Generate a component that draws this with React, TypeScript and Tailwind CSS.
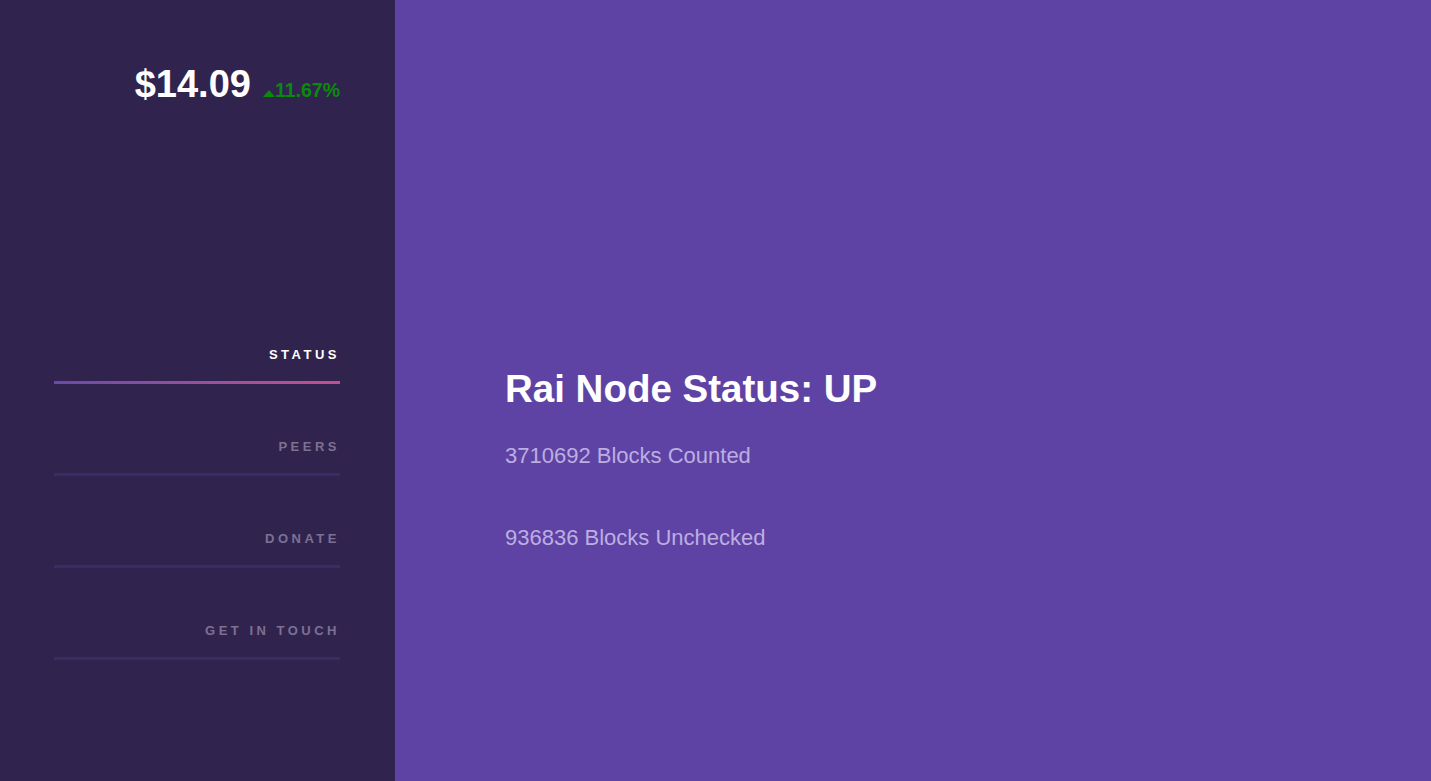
import React from 'react';

const navItems = ['Status', 'Peers', 'Donate', 'Get in touch'];

const App: React.FC = () => {
  return (
    <div className="flex w-full h-[781px] font-['Liberation_Sans',Arial,sans-serif]">
      <aside className="w-[395px] shrink-0 bg-[#30244f] flex flex-col pl-[54px] pr-[55px]">
        <div className="flex items-baseline justify-end gap-3 pt-[60px]">
          <span className="text-[38px] font-bold text-white leading-[48px]">$14.09</span>
          <span className="flex items-baseline text-[19.5px] font-bold text-[#0a8a0a]">
            <svg width="12" height="7" viewBox="0 0 12 7" className="mb-[4px]">
              <polygon points="6,0 12,7 0,7" fill="#0a8a0a" />
            </svg>
            11.67%
          </span>
        </div>
        <nav className="flex flex-col mt-[239px]">
          {navItems.map((item, index) => (
            <div key={index} className="flex flex-col">
              <span
                className={`text-right text-[13px] font-bold uppercase tracking-[3.5px] leading-[16px] ${
                  index === 0 ? 'text-white' : 'text-[#7d7094]'
                }`}
              >
                {item}
              </span>
              <div
                className={`mt-[18px] h-[3px] ${
                  index === 0
                    ? 'bg-gradient-to-r from-[#6a4aa8] to-[#c2508f]'
                    : 'bg-[#3a2c66]'
                } ${index < navItems.length - 1 ? 'mb-[55px]' : ''}`}
              />
            </div>
          ))}
        </nav>
      </aside>
      <main className="flex-1 bg-[#5e43a5] flex flex-col pl-[110px] pt-[367px]">
        <h1 className="text-[38.5px] font-bold text-white leading-[44px]">Rai Node Status: UP</h1>
        <p className="mt-[32px] text-[22px] text-[#bcaee0] leading-[26px]">3710692 Blocks Counted</p>
        <p className="mt-[56px] text-[22px] text-[#bcaee0] leading-[26px]">936836 Blocks Unchecked</p>
      </main>
    </div>
  );
};

export default App;
